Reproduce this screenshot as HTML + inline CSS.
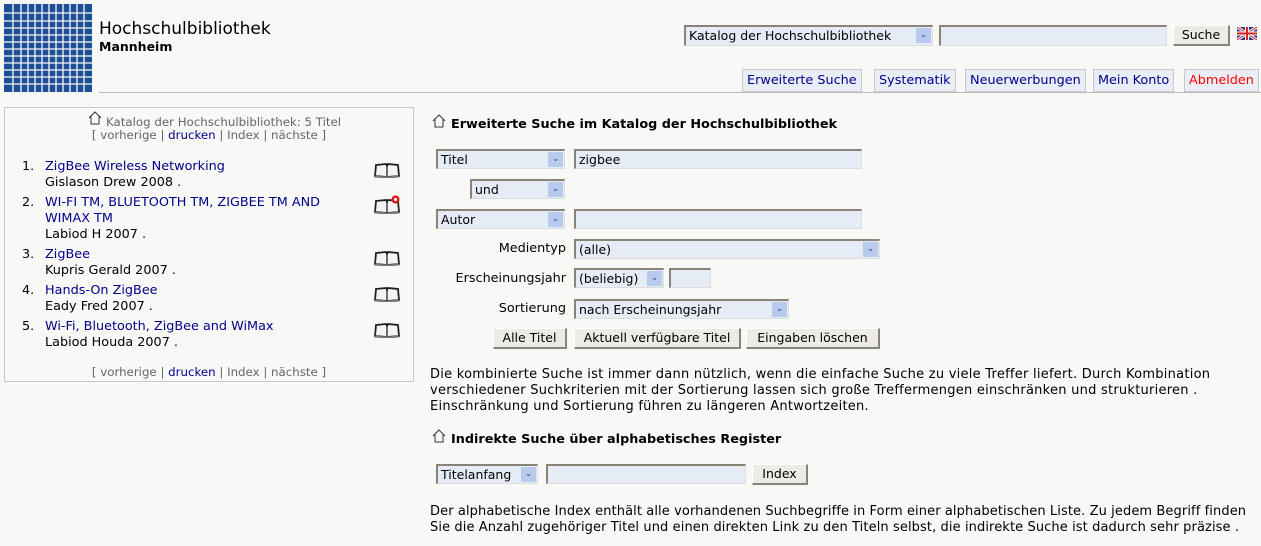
<!DOCTYPE html>
<html><head><meta charset="utf-8">
<style>
*{box-sizing:border-box}
body{margin:0;width:1261px;height:546px;background:#f8f8f6;font-family:"DejaVu Sans","Liberation Sans",sans-serif;font-size:12px;color:#000;position:relative;overflow:hidden}
.a{position:absolute;white-space:nowrap}
a{color:#00008b;text-decoration:none}
.inp{position:absolute;background:#e6ecf6;border-top:2px solid #8a8478;border-left:2px solid #8a8478;border-right:1px solid #ddd;border-bottom:1px solid #ddd;font-size:12.5px;padding:1px 3px;white-space:nowrap;overflow:hidden}
.sel .ar{position:absolute;right:1px;top:1px;width:15px;height:15px;background:#b8cbec;color:#2a4a8a;font-size:9px;text-align:center;line-height:15px}
.btn{position:absolute;background:#ecebe6;border-right:2px solid #8a8478;border-bottom:2px solid #8a8478;border-top:1px solid #fff;border-left:1px solid #fff;font-size:12.5px;text-align:center;line-height:17px}
.tab{position:absolute;top:69px;height:23px;border:1px solid #c8c8cc;background:#e8edf6;color:#00008b;font-size:12.8px;line-height:22px;padding:0 4px;white-space:nowrap}
.h{font-weight:bold;font-size:12.8px}
.it{position:absolute;left:22px;font-size:12.8px;line-height:16px}
.it span{display:inline-block;width:23px}
.it div{padding-left:23px}
.bk{position:absolute;left:374px}
</style></head><body>
<svg width="0" height="0" style="position:absolute"><defs>
<symbol id="book" viewBox="0 0 26 16"><path d="M2 3L12 2L13 4L14 2L24 3L25 14L13 15L1 14Z" fill="#f4f4f4" stroke="#222" stroke-width="1.8"/><path d="M13 4V15" stroke="#222" stroke-width="1.3"/><path d="M1 14.5L13 15.5L25 14.5" stroke="#777" stroke-width="2" fill="none"/></symbol>
<symbol id="home" viewBox="0 0 14 14"><path d="M1 7L7 1L13 7M3 5V13H11V5" fill="none" stroke="#333" stroke-width="1"/></symbol>
</defs></svg>
<svg class="a" style="left:4px;top:4px" width="88" height="88">
<rect width="88" height="88" fill="#1d4f96"/>
<g stroke="#f8f8f6" stroke-width="1.3">
<line x1="9" y1="0" x2="9" y2="88"/><line x1="17" y1="0" x2="17" y2="88"/><line x1="24" y1="0" x2="24" y2="88"/><line x1="31" y1="0" x2="31" y2="88"/><line x1="38" y1="0" x2="38" y2="88"/><line x1="45" y1="0" x2="45" y2="88"/><line x1="52" y1="0" x2="52" y2="88"/><line x1="59" y1="0" x2="59" y2="88"/><line x1="66" y1="0" x2="66" y2="88"/><line x1="73" y1="0" x2="73" y2="88"/><line x1="80" y1="0" x2="80" y2="88"/>
<line y1="9" x1="0" y2="9" x2="88"/><line y1="17" x1="0" y2="17" x2="88"/><line y1="24" x1="0" y2="24" x2="88"/><line y1="31" x1="0" y2="31" x2="88"/><line y1="38" x1="0" y2="38" x2="88"/><line y1="45" x1="0" y2="45" x2="88"/><line y1="52" x1="0" y2="52" x2="88"/><line y1="59" x1="0" y2="59" x2="88"/><line y1="66" x1="0" y2="66" x2="88"/><line y1="73" x1="0" y2="73" x2="88"/><line y1="80" x1="0" y2="80" x2="88"/>
</g></svg>
<div class="a" style="left:99px;top:19px;font-size:17px">Hochschulbibliothek</div>
<div class="a" style="left:99px;top:39px;font-size:12.5px;font-weight:bold">Mannheim</div>
<div class="a" style="left:99px;top:92px;width:1162px;height:1px;background:#bbb"></div>

<div class="inp sel" style="left:684px;top:25px;width:249px;height:21px">Katalog der Hochschulbibliothek<span class="ar">&#8964;</span></div>
<div class="inp" style="left:939px;top:25px;width:228px;height:21px"></div>
<div class="btn" style="left:1173px;top:25px;width:57px;height:21px;line-height:18px">Suche</div>
<svg class="a" style="left:1237px;top:27px" width="20" height="13"><rect width="20" height="13" fill="#203c8c"/><path d="M0 0L20 13M20 0L0 13" stroke="#fff" stroke-width="3"/><path d="M0 0L20 13M20 0L0 13" stroke="#d22" stroke-width="1"/><path d="M10 0V13M0 6.5H20" stroke="#fff" stroke-width="4"/><path d="M10 0V13M0 6.5H20" stroke="#d22" stroke-width="2"/></svg>

<div class="tab" style="left:742px">Erweiterte Suche</div>
<div class="tab" style="left:874px">Systematik</div>
<div class="tab" style="left:965px">Neuerwerbungen</div>
<div class="tab" style="left:1093px">Mein Konto</div>
<div class="tab" style="left:1184px;color:#f00">Abmelden</div>

<div class="a" style="left:4px;top:107px;width:410px;height:275px;border:1px solid #c8c8c8"></div>
<svg class="a" style="left:88px;top:111px" width="14" height="14"><use href="#home"/></svg>
<div class="a" style="left:106px;top:115px;color:#666;font-size:11.8px">Katalog der Hochschulbibliothek: 5 Titel</div>
<div class="a" style="left:0;top:128px;width:418px;text-align:center;color:#666;font-size:11.8px">[ vorherige | <a>drucken</a> | Index | nächste ]</div>
<div class="it" style="top:159px"><span>1.</span><a>ZigBee Wireless Networking</a><div>Gislason Drew 2008 .</div></div>
<div class="it" style="top:195px"><span>2.</span><a>WI-FI TM, BLUETOOTH TM, ZIGBEE TM AND</a><div><a>WIMAX TM</a></div><div>Labiod H 2007 .</div></div>
<div class="it" style="top:247px"><span>3.</span><a>ZigBee</a><div>Kupris Gerald 2007 .</div></div>
<div class="it" style="top:283px"><span>4.</span><a>Hands-On ZigBee</a><div>Eady Fred 2007 .</div></div>
<div class="it" style="top:319px"><span>5.</span><a>Wi-Fi, Bluetooth, ZigBee and WiMax</a><div>Labiod Houda 2007 .</div></div>
<svg class="bk" style="top:162px" width="26" height="16"><use href="#book"/></svg>
<svg class="bk" style="top:198px" width="26" height="16"><use href="#book"/></svg>
<svg class="a" style="left:391px;top:195px" width="9" height="9"><circle cx="4.5" cy="4.5" r="4" fill="#d11"/><circle cx="4.5" cy="4.5" r="1.6" fill="#fff"/></svg>
<svg class="bk" style="top:250px" width="26" height="16"><use href="#book"/></svg>
<svg class="bk" style="top:286px" width="26" height="16"><use href="#book"/></svg>
<svg class="bk" style="top:322px" width="26" height="16"><use href="#book"/></svg>
<div class="a" style="left:0;top:365px;width:418px;text-align:center;color:#666;font-size:11.8px">[ vorherige | <a>drucken</a> | Index | nächste ]</div>

<svg class="a" style="left:432px;top:114px" width="14" height="14"><use href="#home"/></svg>
<div class="a h" style="left:451px;top:117px">Erweiterte Suche im Katalog der Hochschulbibliothek</div>
<div class="inp sel" style="left:436px;top:149px;width:129px;height:20px">Titel<span class="ar">&#8964;</span></div>
<div class="inp" style="left:574px;top:149px;width:288px;height:20px">zigbee</div>
<div class="inp sel" style="left:470px;top:179px;width:95px;height:20px">und<span class="ar">&#8964;</span></div>
<div class="inp sel" style="left:436px;top:209px;width:129px;height:20px">Autor<span class="ar">&#8964;</span></div>
<div class="inp" style="left:574px;top:209px;width:288px;height:20px"></div>
<div class="a" style="left:420px;top:241px;width:146px;text-align:right;font-size:12.8px">Medientyp</div>
<div class="inp sel" style="left:574px;top:239px;width:306px;height:20px">(alle)<span class="ar">&#8964;</span></div>
<div class="a" style="left:420px;top:271px;width:146px;text-align:right;font-size:12.8px">Erscheinungsjahr</div>
<div class="inp sel" style="left:574px;top:268px;width:90px;height:20px">(beliebig)<span class="ar">&#8964;</span></div>
<div class="inp" style="left:669px;top:268px;width:42px;height:20px"></div>
<div class="a" style="left:420px;top:301px;width:146px;text-align:right;font-size:12.8px">Sortierung</div>
<div class="inp sel" style="left:574px;top:299px;width:215px;height:20px">nach Erscheinungsjahr<span class="ar">&#8964;</span></div>
<div class="btn" style="left:493px;top:328px;width:74px;height:21px">Alle Titel</div>
<div class="btn" style="left:574px;top:328px;width:167px;height:21px">Aktuell verfügbare Titel</div>
<div class="btn" style="left:746px;top:328px;width:134px;height:21px">Eingaben löschen</div>

<div class="a" style="left:430px;top:367px;font-size:13px;line-height:16px;letter-spacing:0.25px">Die kombinierte Suche ist immer dann nützlich, wenn die einfache Suche zu viele Treffer liefert. Durch Kombination<br>verschiedener Suchkriterien mit der Sortierung lassen sich große Treffermengen einschränken und strukturieren .<br>Einschränkung und Sortierung führen zu längeren Antwortzeiten.</div>
<svg class="a" style="left:432px;top:429px" width="14" height="14"><use href="#home"/></svg>
<div class="a h" style="left:451px;top:432px">Indirekte Suche über alphabetisches Register</div>
<div class="inp sel" style="left:436px;top:464px;width:102px;height:20px">Titelanfang<span class="ar">&#8964;</span></div>
<div class="inp" style="left:546px;top:464px;width:200px;height:20px"></div>
<div class="btn" style="left:752px;top:464px;width:56px;height:21px">Index</div>
<div class="a" style="left:430px;top:504px;font-size:13px;line-height:16px;letter-spacing:0.1px">Der alphabetische Index enthält alle vorhandenen Suchbegriffe in Form einer alphabetischen Liste. Zu jedem Begriff finden<br>Sie die Anzahl zugehöriger Titel und einen direkten Link zu den Titeln selbst, die indirekte Suche ist dadurch sehr präzise .</div>
</body></html>
